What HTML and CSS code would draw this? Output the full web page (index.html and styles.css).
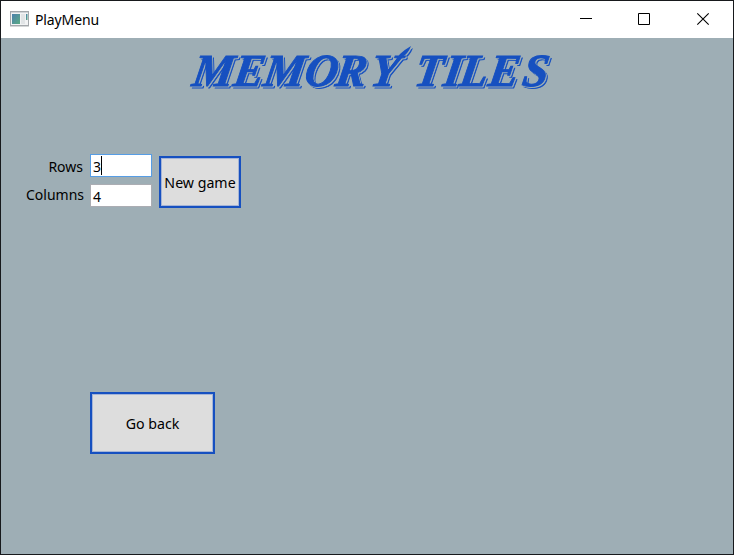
FILE: index.html
```html
<!DOCTYPE html>
<html lang="en">
<head>
<meta charset="utf-8">
<title>PlayMenu</title>
<link rel="stylesheet" href="styles.css">
</head>
<body>
<div class="window">
  <header class="titlebar">
    <svg class="app-icon" width="19" height="16" viewBox="0 0 19 16">
      <defs><linearGradient id="pane" x2="1" y2="1"><stop stop-color="#4c80ad"/><stop offset="1" stop-color="#5bab83"/></linearGradient></defs>
      <rect x=".5" y=".5" width="18" height="14" fill="#f2f3f4" stroke="#a4a8ac"/>
      <path d="M1 1.5h17" stroke="#d0d4d8"/>
      <rect x="2" y="3" width="8" height="10" fill="url(#pane)"/>
      <rect x="11" y="3" width="4" height="10" fill="#e1e4e6"/>
      <rect x="16" y="3" width="1.5" height="6" fill="url(#pane)"/>
      <path d="M0 15.5h19" stroke="#d5d7d8"/>
    </svg>
    <span class="caption">PlayMenu</span>
    <svg class="controls" width="173" height="37" viewBox="0 0 173 37" fill="none" stroke="#000">
      <path d="M20 17.5h12M78.5 12.5h11v11h-11z"/>
      <path d="M137.3 12.3l11.4 11.4M148.7 12.3l-11.4 11.4" stroke-width="1.1"/>
    </svg>
  </header>
  <main class="content">
    <svg class="logo" width="376" height="60" viewBox="185 38 376 60">
      <defs>
        <filter id="inline" x="-5%" y="-20%" width="110%" height="140%" color-interpolation-filters="sRGB">
          <feOffset in="SourceGraphic" dx="2" dy="2" result="outer"/>
          <feFlood flood-color="#9eaeb5"/>
          <feComposite in2="SourceAlpha" operator="in"/>
          <feOffset dx="1" dy="1" result="gap"/>
          <feMerge><feMergeNode in="outer"/><feMergeNode in="gap"/><feMergeNode in="SourceGraphic"/></feMerge>
        </filter>
      </defs>
      <g filter="url(#inline)">
        <text class="logo-text" transform="translate(0 85.5) skewX(-9)" x="191 232 262 303 334 369 400 413 442 458 487 521" y="0">MEMORY TILES</text>
        <path class="swash" d="M389 69L400 54Q404 50 411 46Q408 54 402 57L392 69Z"/>
      </g>
    </svg>
    <section class="settings">
      <div class="fields">
        <label for="rows">Rows</label>
        <div class="field active" id="rows">3<i class="caret"></i></div>
        <label class="columns-label" for="columns">Columns</label>
        <div class="field" id="columns">4</div>
      </div>
      <button class="new-game">New game</button>
    </section>
    <button class="go-back">Go back</button>
  </main>
</div>
</body>
</html>
```
FILE: styles.css
```css
* { box-sizing: border-box; }
body {
  margin: 0;
  font: 14px/20px "Noto Sans", "Open Sans", sans-serif;
  color: #000;
}
.window {
  display: flex;
  flex-direction: column;
  width: 734px;
  height: 555px;
  border: 1px solid #17191c;
  background: #9eaeb5;
}
.titlebar {
  display: flex;
  flex: 0 0 37px;
  background: #fff;
}
.app-icon { margin: 10px 0 0 9px; }
.caption {
  margin: 9px 0 0 6px;
  letter-spacing: -.12px;
}
.controls { margin-left: auto; }
.content {
  display: flex;
  flex-direction: column;
  align-items: flex-start;
}
.logo { display: block; margin-left: 184px; }
.logo-text {
  font: italic bold 46px "Liberation Serif", serif;
  fill: #1650c0;
  stroke: #1650c0;
  stroke-width: .9px;
}
.swash { fill: #1650c0; }
.settings {
  display: flex;
  gap: 7px;
  margin: 56px 0 0 24px;
}
.fields {
  display: grid;
  grid-template-columns: 59px 62px;
  grid-template-rows: 23px 23px;
  column-gap: 6px;
  row-gap: 7px;
}
.fields label {
  padding-top: 3px;
  text-align: right;
  padding-right: 1px;
}
.fields .columns-label { padding: 1px 0 0; }
.field {
  display: flex;
  align-items: center;
  padding: 2px 0 0 2px;
  border: 1px solid #abadb3;
  background: #fff;
}
.active { border-color: #569de5; }
.caret {
  width: 1px;
  height: 19px;
  margin-top: -2px;
  background: #000;
}
button {
  padding: 2px 0 0;
  border: 2px solid #1650c0;
  box-shadow: inset 0 0 0 1px #a5b4d6;
  background: #ddd;
  font: 14.2px/20px "Noto Sans", "Open Sans", sans-serif;
  color: #000;
}
.new-game {
  width: 82px;
  height: 52px;
  margin-top: 2px;
}
.go-back {
  width: 125px;
  height: 62px;
  margin: 184px 0 0 89px;
}
```
